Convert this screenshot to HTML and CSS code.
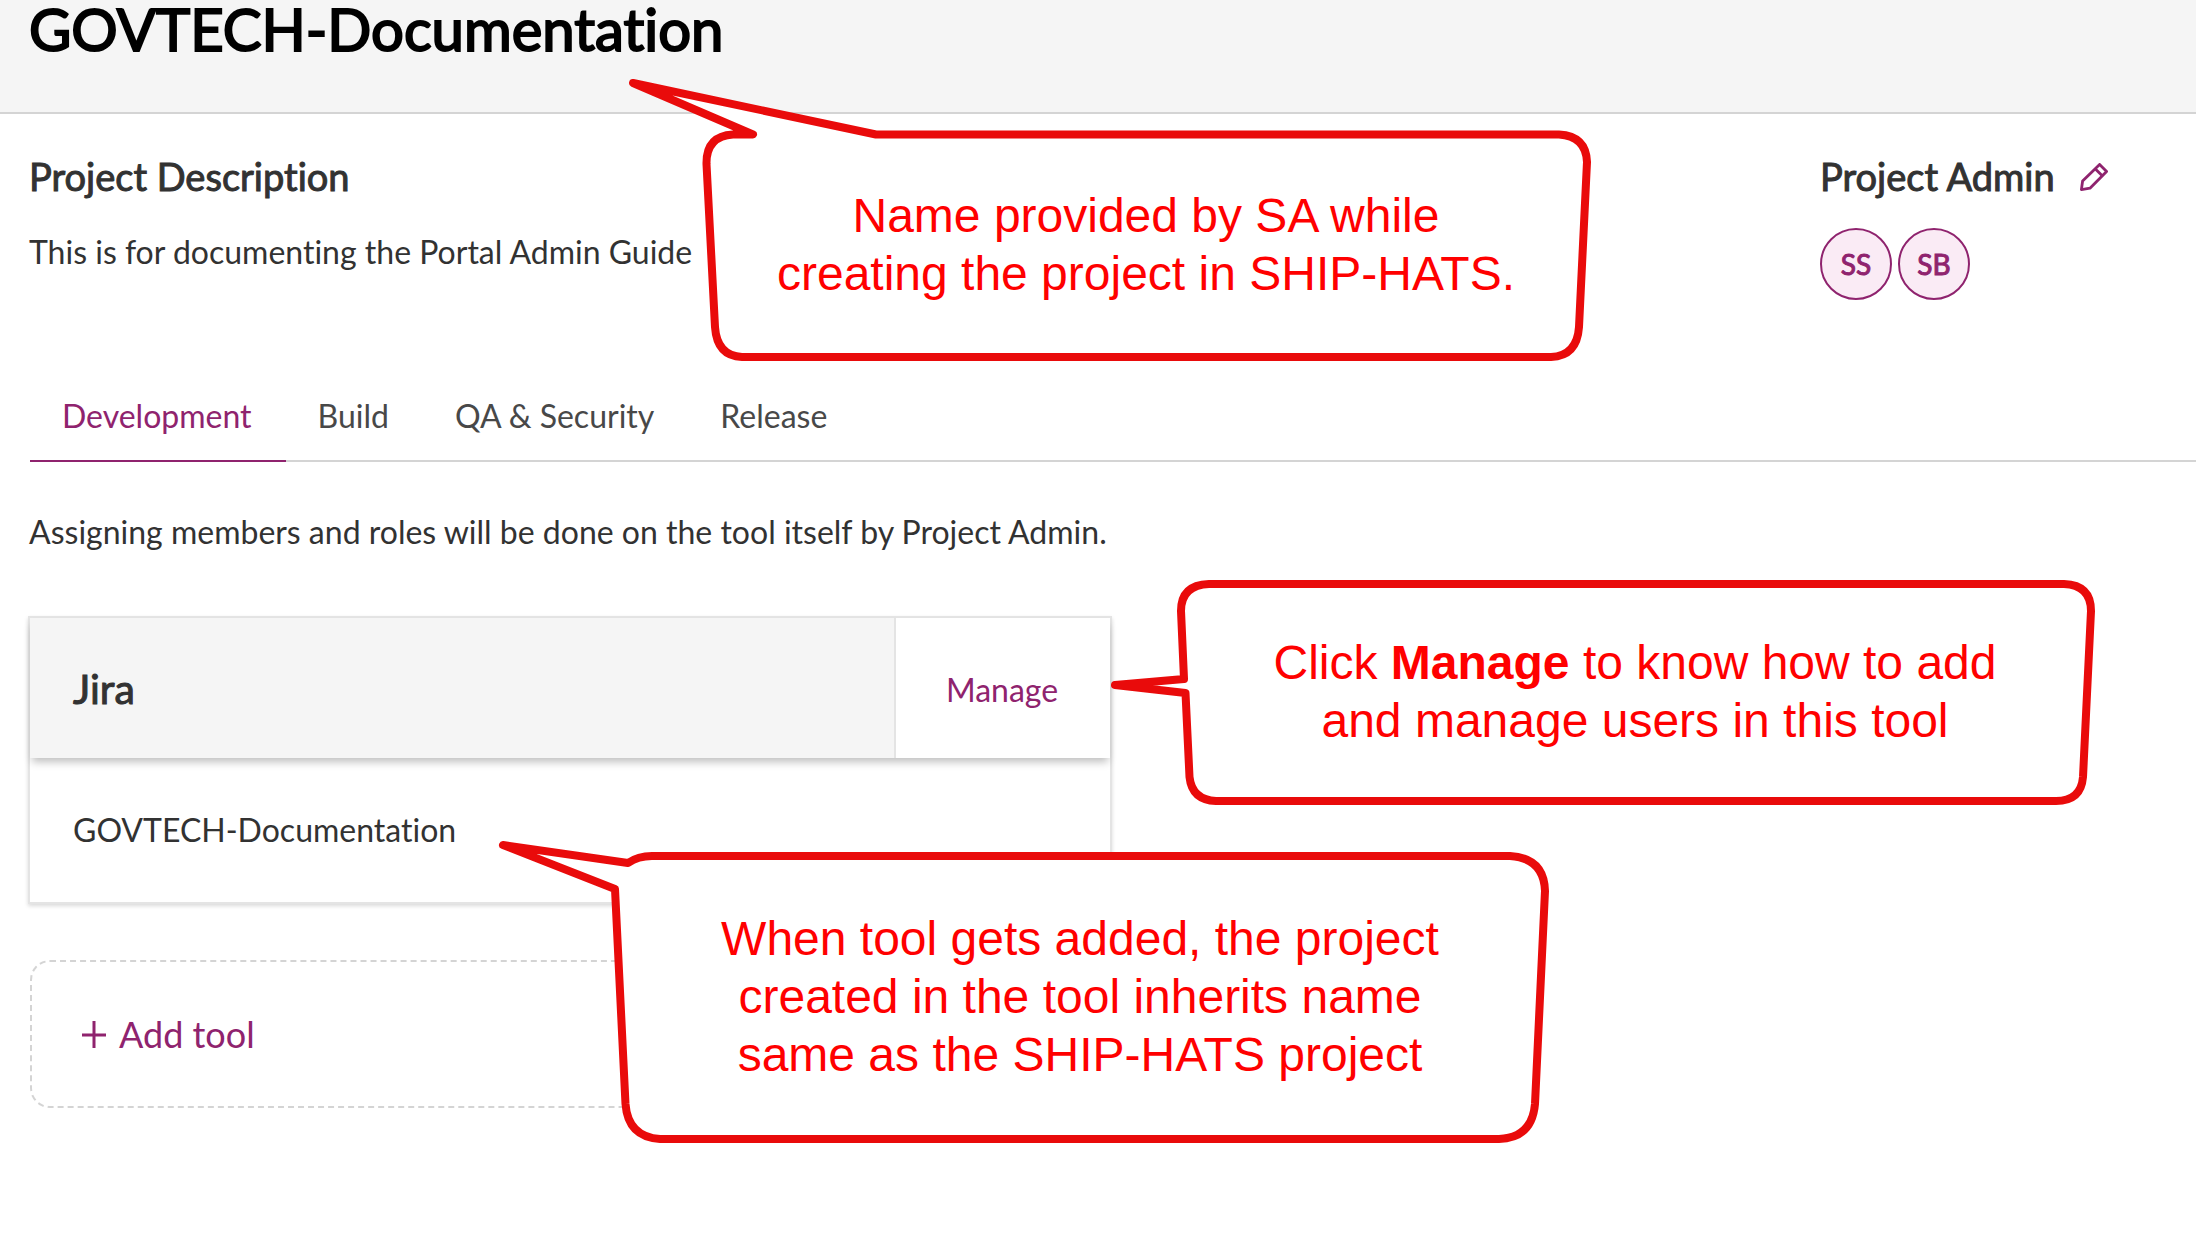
FILE: index.html
```html
<!DOCTYPE html>
<html lang="en">
<head>
<meta charset="utf-8">
<title>GOVTECH-Documentation</title>
<link rel="stylesheet" href="styles.css">
</head>
<body>
<header class="page-header">
  <h1 class="page-title">GOVTECH-Documentation</h1>
</header>
<main class="page">
  <div class="summary">
    <section class="summary-block">
      <h2 class="heading">Project Description</h2>
      <p class="text description">This is for documenting the Portal Admin Guide</p>
    </section>
    <section class="summary-block">
      <div class="heading-row">
        <h2 class="heading">Project Admin</h2>
        <button class="icon-button" type="button" aria-label="Edit project admin">
          <svg width="28" height="28" viewBox="0 0 28 28" fill="none" stroke="currentColor" stroke-width="2.8" stroke-linejoin="round"><path d="M1.400 26.600 2.600 18 19.600 1.400 26.600 8.400 10 25.200Z"/><path d="M15.400 6 22 12.600"/></svg>
        </button>
      </div>
      <ul class="avatars">
        <li class="avatar">SS</li>
        <li class="avatar">SB</li>
      </ul>
    </section>
  </div>

  <nav class="tabs">
    <a class="tab tab-active" href="#development">Development</a>
    <a class="tab" href="#build">Build</a>
    <a class="tab" href="#qa">QA &amp; Security</a>
    <a class="tab" href="#release">Release</a>
  </nav>

  <p class="text note">Assigning members and roles will be done on the tool itself by Project Admin.</p>

  <section class="tool-card">
    <div class="tool-head">
      <h2 class="heading tool-name">Jira</h2>
      <a class="manage" href="#manage">Manage</a>
    </div>
    <p class="text tool-project">GOVTECH-Documentation</p>
  </section>

  <button class="add-tool" type="button">
    <svg width="24" height="28" viewBox="0 0 24 28" fill="none" stroke="currentColor" stroke-width="3"><path d="M0 15H24M12 1V28"/></svg>
    Add tool
  </button>
</main>

<aside class="callout callout-name">
  <svg class="bubble" viewBox="626 76 968 288"><path d="M753 134.500H733Q706 136 706.500 164L715 327Q717 356 742 357H1551Q1577 356 1579 327L1587 162Q1586 136 1559 134.500H876L633 83Z"/></svg>
  <p class="callout-text">Name provided by SA while<br>creating the project in SHIP-HATS.</p>
</aside>
<aside class="callout callout-manage">
  <svg class="bubble" viewBox="1108 578 992 230"><path d="M1184 679 1181 611Q1181 585 1209 584H2064Q2091 585 2091 611L2083 777Q2081 801 2056 801H1216Q1192 800 1189.500 777L1185.500 693 1115 685Z"/></svg>
  <p class="callout-text">Click <strong>Manage</strong> to know how to add<br>and manage users in this tool</p>
</aside>
<aside class="callout callout-project">
  <svg class="bubble" viewBox="496 838 1056 308"><path d="M628 863Q638 856 652 856H1510Q1544 858 1545 891L1535 1104Q1532 1138 1499 1139H660Q628 1137 625.500 1104L615 889 503 845Z"/></svg>
  <p class="callout-text">When tool gets added, the project<br>created in the tool inherits name<br>same as the SHIP-HATS project</p>
</aside>
</body>
</html>
```
FILE: styles.css
```css
* {
  box-sizing: border-box;
}

body {
  position: relative;
  min-height: 100vh;
  margin: 0;
  background: #fff;
  color: #323232;
  font-family: Lato, "Liberation Sans", sans-serif;
  font-size: 32px;
  font-variant-ligatures: none;
  line-height: 40px;
}

h1, h2, p, ul {
  margin: 0;
  padding: 0;
}

button {
  font: inherit;
}

.page-header {
  height: 114px;
  padding-left: 29px;
  background: #f5f5f5;
  border-bottom: 2px solid #d4d4d4;
}

/* Regular weight thickened by a stroke, for a softer bold */
.page-title {
  color: #000;
  font-size: 58px;
  font-weight: 400;
  line-height: 58px;
  -webkit-text-stroke: 2px currentColor;
}

.page {
  padding: 38px 0 56px 29px;
}

.summary {
  display: grid;
  grid-template-columns: 1fr 376px;
}

.heading {
  font-size: 38px;
  font-weight: 400;
  line-height: 48px;
  -webkit-text-stroke: 1px currentColor;
}

.heading-row {
  display: flex;
  align-items: center;
  gap: 25px;
}

.icon-button {
  display: flex;
  padding: 2px 0 0;
  border: 0;
  background: none;
  color: #8f236e;
}

.description {
  padding-top: 32px;
}

.avatars {
  display: flex;
  gap: 6px;
  padding-top: 28px;
  list-style: none;
}

.avatar {
  display: flex;
  align-items: center;
  justify-content: center;
  width: 72px;
  height: 72px;
  border: 2px solid #8f236e;
  border-radius: 50%;
  background: #faebf5;
  color: #8f236e;
  font-size: 28px;
  -webkit-text-stroke: 1px currentColor;
}

.tabs {
  display: flex;
  margin: 72px 0 0 1px;
  border-bottom: 2px solid #d4d4d4;
}

.tab {
  margin-bottom: -2px;
  padding: 24px 34px 24px 32px;
  border-bottom: 2px solid transparent;
  color: #484848;
  text-decoration: none;
}

.tab-active {
  border-color: #8f236e;
  color: #8f236e;
}

.note {
  padding-top: 50px;
}

.tool-card {
  width: 1084px;
  margin: 64px 0 0 -1px;
  border: 2px solid #e4e4e4;
  box-shadow: 0 2px 4px rgba(0, 0, 0, 0.15);
}

.tool-head {
  display: flex;
  height: 140px;
  background: #f5f5f5;
  box-shadow: 0 6px 8px -2px rgba(0, 0, 0, 0.25);
}

.tool-name {
  flex: 1;
  padding: 47px 43px 0;
  font-size: 41px;
}

.manage {
  width: 216px;
  padding: 52px 2px 0 0;
  border-left: 2px solid #e4e4e4;
  background: #fff;
  color: #8f236e;
  text-align: center;
  text-decoration: none;
}

.tool-project {
  padding: 52px 43px;
}

.add-tool {
  display: flex;
  align-items: center;
  gap: 13px;
  width: 1080px;
  height: 148px;
  margin: 56px 0 0 1px;
  padding: 0 50px;
  border: 2px dashed #d4d4d4;
  border-radius: 20px;
  background: #fff;
  color: #8f236e;
  font-size: 36px;
}

.callout {
  position: absolute;
  display: flex;
  justify-content: center;
  color: #f00;
  font-family: "Liberation Sans", Arial, sans-serif;
  font-size: 48px;
  line-height: 58px;
  text-align: center;
}

.bubble {
  position: absolute;
  inset: 0;
  fill: #fff;
  stroke: #e90b0b;
  stroke-width: 8;
  stroke-linejoin: round;
}

.callout-text {
  position: relative;
}

.callout-name {
  left: 626px;
  top: 76px;
  width: 968px;
  height: 288px;
  padding: 111px 0 0 72px;
}

.callout-manage {
  left: 1108px;
  top: 578px;
  width: 992px;
  height: 230px;
  padding: 56px 0 0 62px;
}

.callout-project {
  left: 496px;
  top: 838px;
  width: 1056px;
  height: 308px;
  padding: 72px 0 0 112px;
}
```
